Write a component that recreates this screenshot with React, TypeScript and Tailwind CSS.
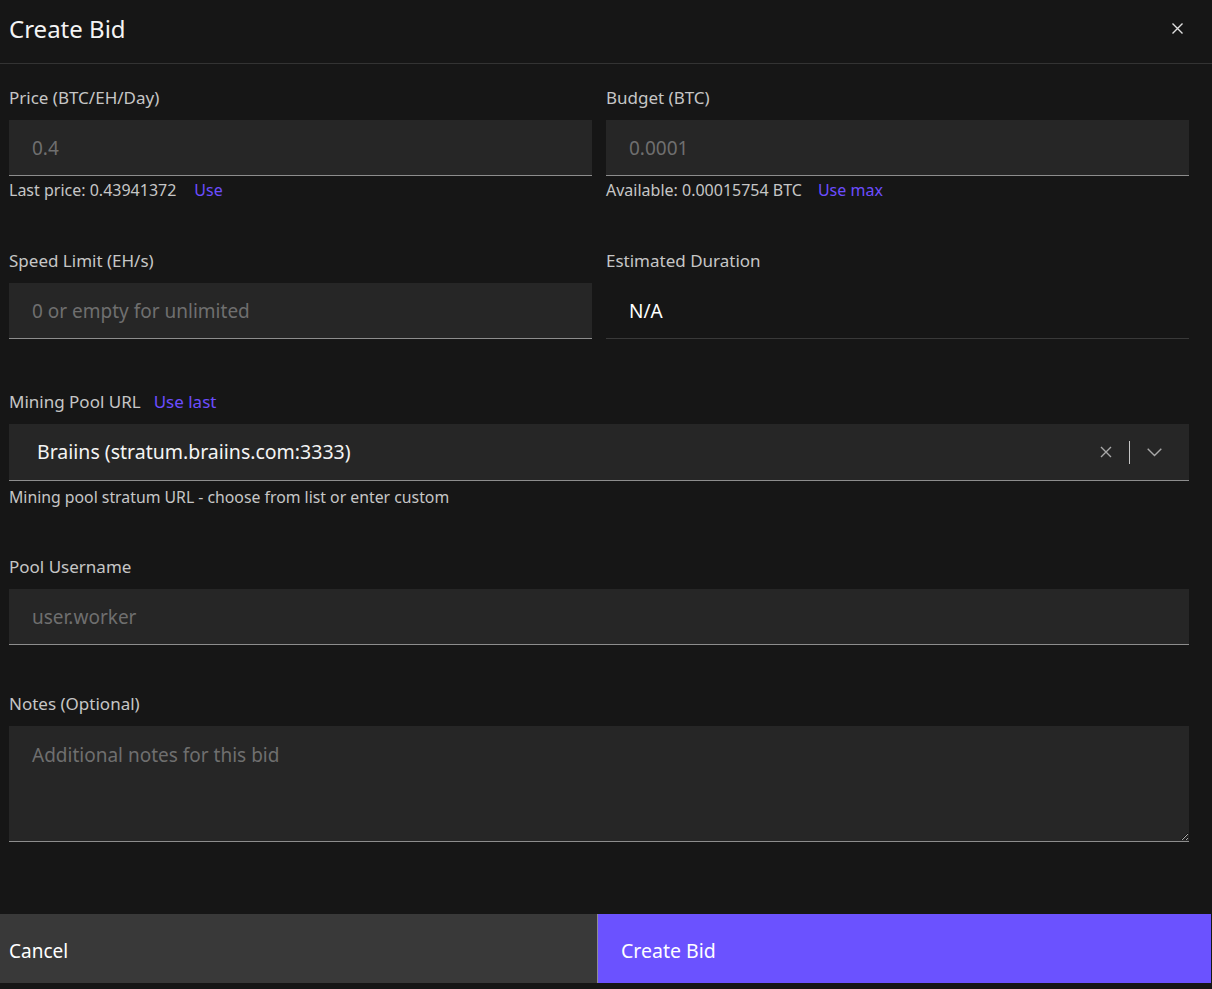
import React from "react";

const font = { fontFamily: "'Noto Sans', Roboto, sans-serif" };

function Label({ children }: { children: React.ReactNode }) {
  return <div className="text-[17px] leading-[20px] text-[#c6c6c6]">{children}</div>;
}

function TextInput({ placeholder }: { placeholder: string }) {
  return (
    <input
      placeholder={placeholder}
      className="mt-3 block h-[56px] w-full border-b border-[#8d8d8d] bg-[#262626] px-[23px] text-[19px] text-white outline-none placeholder:text-[#6f6f6f]"
      style={font}
    />
  );
}

export default function App() {
  return (
    <div className="min-h-[989px] w-[1212px] bg-[#161616] text-white" style={font}>
      <div className="flex h-[64px] items-center justify-between border-b border-[#333333] pb-[6px] pl-[9px] pr-[29px]">
        <h1 className="text-[24px] leading-[30px] text-[#f4f4f4]">Create Bid</h1>
        <svg width="11" height="11" viewBox="0 0 11 11" className="text-[#e0e0e0]">
          <path d="M0.5 0.5 L10.5 10.5 M10.5 0.5 L0.5 10.5" stroke="currentColor" strokeWidth="1.4" />
        </svg>
      </div>

      <div className="pl-[9px] pr-[23px] pt-[24px]">
        <div className="grid grid-cols-2 gap-x-[14px]">
          <div>
            <Label>Price (BTC/EH/Day)</Label>
            <TextInput placeholder="0.4" />
            <div className="mt-[5px] flex gap-[18px] text-[16px] leading-[18px]">
              <span className="text-[#c6c6c6]">Last price: 0.43941372</span>
              <span className="text-[#6c4dff]">Use</span>
            </div>
          </div>
          <div>
            <Label>Budget (BTC)</Label>
            <TextInput placeholder="0.0001" />
            <div className="mt-[5px] flex gap-[16px] text-[16px] leading-[18px]">
              <span className="text-[#c6c6c6]">Available: 0.00015754 BTC</span>
              <span className="text-[#6c4dff]">Use max</span>
            </div>
          </div>
        </div>

        <div className="mt-[52px] grid grid-cols-2 gap-x-[14px]">
          <div>
            <Label>Speed Limit (EH/s)</Label>
            <TextInput placeholder="0 or empty for unlimited" />
          </div>
          <div>
            <Label>Estimated Duration</Label>
            <div className="mt-3 flex h-[56px] items-center border-b border-[#393939] px-[23px] pt-[1px] text-[19px] text-white">
              N/A
            </div>
          </div>
        </div>

        <div className="mt-[53px]">
          <div className="flex gap-[13px] text-[17px] leading-[20px]">
            <span className="text-[#c6c6c6]">Mining Pool URL</span>
            <span className="text-[#6c4dff]">Use last</span>
          </div>
          <div className="mt-3 flex h-[57px] items-center border-b border-[#8d8d8d] bg-[#262626] pl-[28px] pr-[27px]">
            <span className="flex-1 text-[19.5px] text-[#f4f4f4]">Braiins (stratum.braiins.com:3333)</span>
            <svg width="12" height="12" viewBox="0 0 12 12" className="text-[#a8a8a8]">
              <path d="M1 1 L11 11 M11 1 L1 11" stroke="currentColor" strokeWidth="1.4" />
            </svg>
            <div className="mx-[17px] h-[23px] w-px bg-[#c6c6c6]" />
            <svg width="15" height="9" viewBox="0 0 15 9" className="text-[#a8a8a8]">
              <path d="M0.7 0.7 L7.5 7.5 L14.3 0.7" fill="none" stroke="currentColor" strokeWidth="1.4" />
            </svg>
          </div>
          <div className="mt-[7px] text-[15.8px] leading-[18px] text-[#c6c6c6]">
            Mining pool stratum URL - choose from list or enter custom
          </div>
        </div>

        <div className="mt-[51px]">
          <Label>Pool Username</Label>
          <TextInput placeholder="user.worker" />
        </div>

        <div className="mt-[49px]">
          <Label>Notes (Optional)</Label>
          <textarea
            placeholder="Additional notes for this bid"
            className="mt-3 block h-[116px] w-full resize-y border-b border-[#8d8d8d] bg-[#262626] px-[23px] pt-[15px] text-[19px] text-white outline-none placeholder:text-[#6f6f6f]"
            style={font}
          />
        </div>
      </div>

      <div className="mt-[72px] flex h-[69px] w-[1211px]">
        <button className="flex h-full w-[597px] items-center bg-[#393939] pl-[9px] pt-[5px] text-[19px] text-white" style={font}>
          Cancel
        </button>
        <div className="h-full w-px bg-[#8d8d8d]" />
        <button className="flex h-full flex-1 items-center bg-[#6b52ff] pl-[23px] pt-[5px] text-[19.5px] text-white" style={font}>
          Create Bid
        </button>
      </div>
    </div>
  );
}
